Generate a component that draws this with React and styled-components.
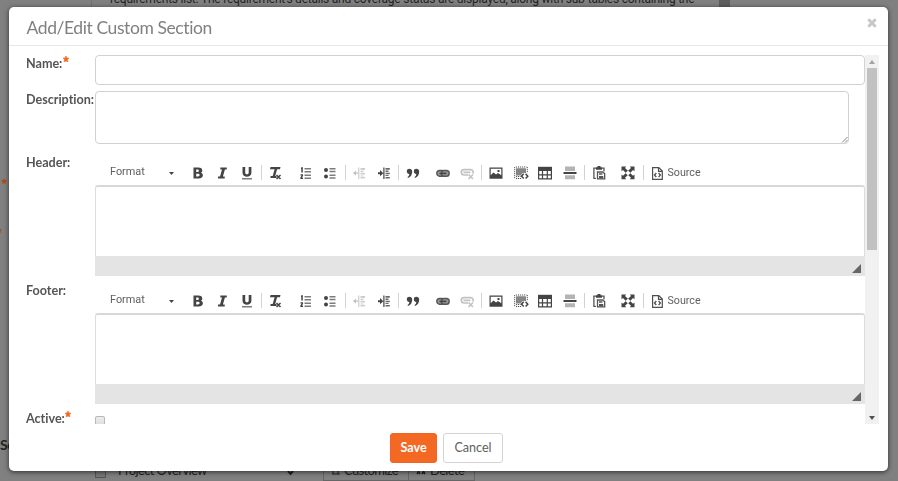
import React from "react";
import styled, { createGlobalStyle } from "styled-components";

const Global = createGlobalStyle`
  * { box-sizing: border-box; }
  html, body { margin: 0; height: 100%; overflow: hidden; background: #808080; }
  body { font-family: Lato, sans-serif; color: #555; font-variant-ligatures: none; }
`;

const Page = styled.div`
  height: 481px;
  overflow: hidden;
  display: flex;
  flex-direction: column;
  justify-content: space-between;
  color: #222;
`;
const PageTop = styled.div`
  display: flex;
  height: 150px;
  margin-left: 91px;
  width: 639px;
  border-left: 1px solid #707070;
  border-right: 11px solid #5e5e5e;
`;
const PageText = styled.p`
  margin: -9px 0 0 18px;
  font: 12px/16px Roboto, sans-serif;
  white-space: nowrap;
  letter-spacing: -0.235px;
`;
const PageMiddle = styled.div`
  flex: 1;
  padding-top: 28px;
  overflow: hidden;
`;
const PageMark = styled.div`
  display: flex;
  justify-content: flex-end;
  width: 8px;
  height: ${(p) => p.$height};
  color: #b04a12;
  margin-left: ${(p) => p.$left};
`;
const PageHeading = styled.div`
  font: 700 14px/18px Lato, sans-serif;
  letter-spacing: -0.4px;
  padding-top: 16px;
`;
const PageBottom = styled.div`
  display: flex;
  height: 18px;
  padding-left: 95px;
  font: 13px/14px Lato, sans-serif;
  letter-spacing: -0.65px;
`;
const PageFile = styled.span`
  width: 11px;
  height: 15px;
  border: 1px solid #555;
  background: #777;
  margin-right: 12px;
`;
const PageName = styled.span`
  width: 169px;
  letter-spacing: -0.65px;
`;
const PageChevron = styled.span`
  width: 36px;
  margin-top: 2px;
`;
const PageButton = styled.span`
  width: ${(p) => p.$width};
  height: 18px;
  border: 1px solid #666;
  border-top: 0;
  margin-right: -1px;
  padding-left: 7px;
  white-space: nowrap;
  svg { margin-right: 3px; vertical-align: -1px; }
`;

const Dialog = styled.section`
  position: fixed;
  left: 9px;
  top: 7px;
  width: 879px;
  height: 464px;
  display: flex;
  flex-direction: column;
  background: #fff;
  border-radius: 5px;
  box-shadow: 0 1px 5px rgba(0, 0, 0, 0.65);
`;
const DialogHeader = styled.header`
  display: flex;
  justify-content: space-between;
  height: 39px;
  padding: 8px 10px 0 17.5px;
  border-bottom: 1px solid #e8e8e8;
`;
const Title = styled.h1`
  margin: 0;
  font: 400 17.5px/26px Lato, sans-serif;
  letter-spacing: -0.41px;
  color: #808080;
`;
const Close = styled.button`
  border: 0;
  padding: 0;
  background: none;
  width: 12px;
  height: 15px;
  display: flex;
  align-items: center;
  justify-content: center;
`;
const Body = styled.div`
  display: flex;
  height: 369px;
  margin: 9px 9px 0 17px;
  overflow: hidden;
`;
const Form = styled.form`
  width: 839px;
  height: 369px;
  overflow: hidden;
`;
const Row = styled.div`
  display: grid;
  grid-template-columns: 69px 770px;
  align-items: start;
  height: ${(p) => p.$height};
`;
const Label = styled.label`
  padding: 1px 0 0;
  font: 700 12.6px/16px Lato, sans-serif;
  letter-spacing: -0.02px;
  color: #555;
  white-space: nowrap;
`;
const Required = styled.svg`
  vertical-align: 6px;
  margin-left: 0.5px;
`;
const Input = styled.input`
  width: 770px;
  height: 30px;
  border: 1px solid #d2d2d2;
  border-radius: 4px;
  background: #fff;
  outline: 0;
`;
const AreaBox = styled.div`
  display: flex;
  justify-content: flex-end;
  align-items: flex-end;
  width: 754px;
  height: 52.5px;
  border: 1px solid #d2d2d2;
  border-radius: 4px;
`;
const Checkbox = styled.span`
  width: 10px;
  height: 12px;
  border: 1px solid #b8b8b8;
  border-radius: 2px;
  background: linear-gradient(#eee, #d8d8d8);
`;
const Editor = styled.div`
  width: 770px;
  height: 122px;
`;
const Toolbar = styled.div`
  display: flex;
  align-items: center;
  height: 24px;
  margin: 7px 0 0;
  padding: 0 0 0 15px;
  font: 11px/16px Roboto, sans-serif;
  color: #606060;
`;
const Format = styled.span`
  width: 56px;
  margin-top: -2px;
  font-size: 10.900px;
`;
const Caret = styled.svg`
  margin: 0 11.500px 0 3px;
`;
const Tool = styled.button`
  display: flex;
  align-items: center;
  justify-content: center;
  flex: none;
  width: 24.5px;
  height: 24px;
  margin: 0;
  padding: 0 0 1px;
  border: 0;
  background: none;
  opacity: ${(p) => (p.$off ? 0.32 : 1)};
`;
const Separator = styled.i`
  flex: none;
  width: 1px;
  height: 15px;
  margin: 0 ${(p) => p.$right || "1.5px"} 1px ${(p) => p.$left || "2px"};
  background: ${(p) => (p.$hidden ? "transparent" : "#d2d2d2")};
`;
const SourceTool = styled.span`
  display: flex;
  align-items: center;
  gap: 4.500px;
  margin: 0 0 0 7px;
  font-size: 10.700px;
  svg { margin-top: 0; }
`;
const Canvas = styled.div`
  height: 71px;
  border: 1px solid #dcdcdc;
  border-top: 2px solid #d8d8d8;
  border-bottom: 0;
  border-radius: 3px 3px 0 0;
`;
const EditorFoot = styled.div`
  display: flex;
  justify-content: flex-end;
  height: 20px;
  padding: 8px 4px 0 0;
  background: #e4e4e4;
`;
const Scrollbar = styled.div`
  width: 14px;
  height: 369px;
  background: #f1f1f1;
  display: flex;
  flex-direction: column;
  align-items: center;
`;
const Arrow = styled.div`
  height: 13px;
  display: flex;
  align-items: center;
`;
const Thumb = styled.div`
  width: 10px;
  height: 182px;
  margin-bottom: auto;
  background: #c1c1c1;
`;
const Actions = styled.footer`
  display: flex;
  justify-content: center;
  gap: 6px;
  margin-top: 9px;
  padding-right: 4px;
`;
const Button = styled.button`
  width: ${(p) => (p.$primary ? "47px" : "60px")};
  height: 30px;
  padding: 0;
  border: 1px solid ${(p) => (p.$primary ? "#f26522" : "#d4d4d4")};
  border-radius: 3px;
  background: ${(p) => (p.$primary ? "#f36923" : "#fff")};
  color: ${(p) => (p.$primary ? "#fff" : "#606060")};
  font: ${(p) => (p.$primary ? 700 : 400)} 12.6px/28px Lato, sans-serif;
`;
const CheckboxCell = styled.div`
  display: flex;
  padding-top: 6px;
`;

const icons = {
  bold: <path fillRule="evenodd" d="M3.500 2.500h4.800c2.600 0 4 1.100 4 2.900 0 1.100-.6 1.900-1.500 2.300 1.300.3 2.100 1.200 2.100 2.600 0 2-1.500 3.200-4.200 3.200H3.500zM6.200 4.500v2.400h1.400c1.800 0 1.800-2.400 0-2.400zM6.200 8.800v2.700H8c2.200 0 2.200-2.700 0-2.700z" />,
  italic: <path d="M6.300 2.500h6.500v2h-1.900l-2 7h1.800v2H4v-2h2l2-7H6.300z" />,
  underline: (
    <>
      <path d="M3.500 2h2.700v5.400c0 2.600 3.500 2.600 3.500 0V2h2.700v5.800c0 5.400-8.900 5.400-8.900 0z" />
      <path d="M3 13h10v1.500H3z" opacity=".7" />
    </>
  ),
  removeFormat: (
    <>
      <path d="M2.500 2h10l-.5 2.200H9.100L7.200 11H8.500v2h-6v-2h2.200L6.600 4.200H2z" />
      <path d="m8.500 10 4 4m0-4-4 4" stroke="#444" strokeWidth="1.500" />
    </>
  ),
  numbered: (
    <>
      <path d="M3 2.500l1.800-.6V7.500H3.300V4H3zM2.500 9.200h2.600v1.200l-1 2.300h1V14H2.300v-1.200l1.300-2.300H2.500z" />
      <g opacity=".7"><path d="M6.500 3H13v1.500H6.500zM6.500 6H13v1.500H6.500zM6.500 9.500H13V11H6.500zM6.500 12.500H13V14H6.500z" /></g>
    </>
  ),
  bulleted: (
    <>
      <circle cx="4" cy="5" r="2" /><circle cx="4" cy="11.500" r="2" />
      <g opacity=".7"><path d="M7.500 3h6v1.500h-6zM7.500 5.700h6v1.500h-6zM7.500 9.500h6V11h-6zM7.500 12.200h6v1.500h-6z" /></g>
    </>
  ),
  outdent: (
    <>
      <path d="M7.300 2.500h1v11.500h-1zM2 8 5 5.500v2h2v1.200H5v2z" />
      <path opacity=".8" d="M9.500 3h4.500v2H9.500zM9.500 5.800h3v1.400h-3zM9.500 8h4.500v1.500H9.500zM9.500 10.500h3v1h-3zM9.500 12h4.500v1.500H9.500z" />
    </>
  ),
  indent: (
    <>
      <path d="M7.300 2.500h1.200v11.500H7.300zM2 7.200h2V5l3.300 3.200L4 11.200V9.200H2z" />
      <path opacity=".8" d="M9.500 3h4.300v1.700H9.500zM9.500 5.500h3V7h-3zM9.500 7.800h4.300v1.400H9.500zM9.500 10h3v1h-3zM9.500 12h4.300v1.500H9.500z" />
    </>
  ),
  quote: <path d="M1.800 6.200c0-3.300 5.400-3.300 5.400.2 0 3.200-1.600 5.600-4.200 6.600l-.5-.9c1.200-.8 1.700-1.700 1.800-3C2.700 9 1.800 7.700 1.800 6.200zm7 0c0-3.300 5.400-3.300 5.400.2 0 3.200-1.600 5.600-4.200 6.600l-.5-.9c1.200-.8 1.700-1.700 1.800-3C9.700 9 8.800 7.700 8.800 6.200z" />,
  link: (
    <>
      <rect x="1.800" y="5.500" width="7.800" height="5.700" rx="2.800" fill="#999" stroke="#555" strokeWidth="1.400" />
      <rect x="6.400" y="5.500" width="7.800" height="5.700" rx="2.800" fill="#999" stroke="#555" strokeWidth="1.400" />
      <path d="M4.500 7.600h7v1.600h-7z" />
    </>
  ),
  unlink: (
    <>
      <path d="M9 10H5a2.200 2.200 0 0 1 0-5.300h6.500A2.500 2.500 0 0 1 13.800 8.500M4.500 7.400h7" fill="none" stroke="#444" strokeWidth="1.700" />
      <path d="m9.500 9.500 4.500 4.500m0-4.500L9.500 14" stroke="#444" strokeWidth="1.600" />
    </>
  ),
  image: <path fillRule="evenodd" d="M1.500 2.500h13v11.300h-13zM2.700 3.700v6.500L5.500 7.500l2.500 2 2-1.500 3.300 2.300V3.700zM9.500 5h2v2h-2z" />,
  embed: (
    <>
      <path opacity=".65" d="M3 3.300h10V8H9.500l-1.700 2.500H3z" />
      <path d="M1.700 2v12M14.300 2v6M3 2h10.500M3 11.500h4.500M3 13.500h5" fill="none" stroke="#555" strokeDasharray="1.200 .8" />
      <path d="m10.700 8.800-2.200 2.400 2.200 2.400m1.900-4.800 2.200 2.400-2.200 2.400" fill="none" stroke="#444" strokeWidth="1.500" />
    </>
  ),
  table: (
    <>
      <path d="M1 1.800h14V6H1z" />
      <path d="M1.600 4v9.900h12.800V4M1 9.800h14M5.500 5v9M10.300 5v9" fill="none" stroke="#444" strokeWidth="1.200" />
    </>
  ),
  rule: (
    <>
      <path d="M1.500 7h13v2h-13z" />
      <path opacity=".4" d="M3 1.500h10v4.500H3zM3 10.300h10V14.300H3z" />
    </>
  ),
  paste: (
    <>
      <path d="M5.500 3.200H2.900v10.200h2M10.500 3.200h2.500v3" fill="none" stroke="#555" strokeWidth="1.300" />
      <path d="M5 2.200h1.500V1h3v1.200H11v2.500H5z" />
      <path d="M6.500 7h5.500l1.700 1.700v5.100H6.500z" fill="#fff" stroke="#555" strokeWidth="1.300" />
      <path d="M8 8.300h3.500v1.500H8zM8 11h4.300v2.500H8z" fill="#555" />
    </>
  ),
  maximize: (
    <>
      <path d="M1.500 1.500H6.200L5 3l3 2.800L11 3 9.800 1.500h4.700v4.700L13 5 10.200 8l2.800 2.800 1.500-1.200v4.700H9.800l1.200-1.500-3-2.800-3 2.800 1.200 1.500H1.500V9.600L3 10.800 5.800 8 3 5 1.500 6.200z" />
      <path d="M8 5.400 10.600 8 8 10.600 5.400 8z" fill="#fff" />
    </>
  ),
};

function Icon({ name }) {
  return <svg width="16" height="16" viewBox="0 0 16 16" fill="#444">{icons[name]}</svg>;
}

const toolbar = [
  "bold", "italic", "underline", "|", "removeFormat", " ", "numbered", "bulleted", "|",
  "outdent", "indent", "|", "quote", " ", "link", "unlink", "|",
  "image", "embed", "table", "rule", "|", "paste", " ", "maximize", "|",
];

function RichEditor() {
  return (
    <Editor>
      <Toolbar>
        <Format>Format</Format>
        <Caret width="5" height="3"><path d="M0 0h5L2.500 3z" fill="#444" /></Caret>
        {toolbar.map((t, i) => {
          if (t === "|") return <Separator key={i} />;
          if (t === " ") return <Separator key={i} $hidden $left="2px" $right={i === 5 ? "2.5px" : "2.25px"} />;
          return <Tool key={i} type="button" $off={t === "outdent" || t === "unlink"}><Icon name={t} /></Tool>;
        })}
        <SourceTool>
          <svg width="11" height="13" viewBox="0 0 11 13" fill="none" stroke="#505050">
            <path d="M.6.6h6.200l3.500 3.500v8.200H.6zM6.500.6v3.800h3.800" strokeWidth="1.200" />
            <path d="M4.300 6 2.500 8l1.800 2m2.300-4 1.800 2-1.800 2" strokeWidth="1.300" />
          </svg>
          Source
        </SourceTool>
      </Toolbar>
      <Canvas />
      <EditorFoot><svg width="9" height="9"><path d="M9 0v9H0z" fill="#666" /></svg></EditorFoot>
    </Editor>
  );
}

const starPath = "M3 0 3.900 1.900 6 2.200 4.500 3.700 4.900 5.900 3 4.900 1.100 5.900 1.500 3.700 0 2.200 2.100 1.900z";

function Star() {
  return (
    <Required width="6" height="6" viewBox="0 0 6 6">
      <path d={starPath} fill="#f36923" stroke="#f36923" strokeWidth="0.600" />
    </Required>
  );
}

export default function App() {
  return (
    <>
      <Global />
      <Page>
        <PageTop>
          <PageText>requirements list. The requirement's details and coverage status are displayed, along with sub-tables containing the</PageText>
        </PageTop>
        <PageMiddle>
          <PageMark $left="-1px" $height="49px"><svg width="6" height="6"><path d={starPath} fill="currentColor" /></svg></PageMark>
          <PageMark $left="-6px" $height="193px"><svg width="6" height="6"><path d={starPath} fill="currentColor" /></svg></PageMark>
          <PageHeading>Section</PageHeading>
        </PageMiddle>
        <PageBottom>
          <PageFile />
          <PageName>Project Overview</PageName>
          <PageChevron><svg width="7" height="9"><path d="m1 3 2.500 3L6 3" fill="none" stroke="#222" strokeWidth="2" /></svg></PageChevron>
          <PageButton $width="86px"><svg width="10" height="8"><path d="M1 6h8M2 3v3m5-3v3" stroke="#222" /></svg>Customize</PageButton>
          <PageButton $width="67px"><svg width="11" height="8"><path d="m1 1 3 5m0-5L1 6m5-5 3 5m0-5L6 6" stroke="#222" strokeWidth="1.500" /></svg>Delete</PageButton>
        </PageBottom>
      </Page>
      <Dialog>
        <DialogHeader>
          <Title>Add/Edit Custom Section</Title>
          <Close aria-label="Close">
            <svg width="10" height="10"><path d="m1.300 1.300 7.400 7.400m0-7.400L1.300 8.700" stroke="#c8c8c8" strokeWidth="3" /></svg>
          </Close>
        </DialogHeader>
        <Body>
          <Form>
            <Row $height="36px"><Label>Name:<Star /></Label><Input /></Row>
            <Row $height="63px">
              <Label>Description:</Label>
              <AreaBox><svg width="7" height="7"><path d="M1 6.500 6.500 1M4 6.500 6.500 4" stroke="#888" /></svg></AreaBox>
            </Row>
            <Row $height="128px"><Label>Header:</Label><RichEditor /></Row>
            <Row $height="128px"><Label>Footer:</Label><RichEditor /></Row>
            <Row $height="28px"><Label>Active:<Star /></Label><CheckboxCell><Checkbox /></CheckboxCell></Row>
          </Form>
          <Scrollbar>
            <Arrow><svg width="6" height="4"><path d="M0 4h6L3 0z" fill="#a3a3a3" /></svg></Arrow>
            <Thumb />
            <Arrow><svg width="6" height="4"><path d="M0 0h6L3 4z" fill="#505050" /></svg></Arrow>
          </Scrollbar>
        </Body>
        <Actions>
          <Button $primary>Save</Button>
          <Button>Cancel</Button>
        </Actions>
      </Dialog>
    </>
  );
}
